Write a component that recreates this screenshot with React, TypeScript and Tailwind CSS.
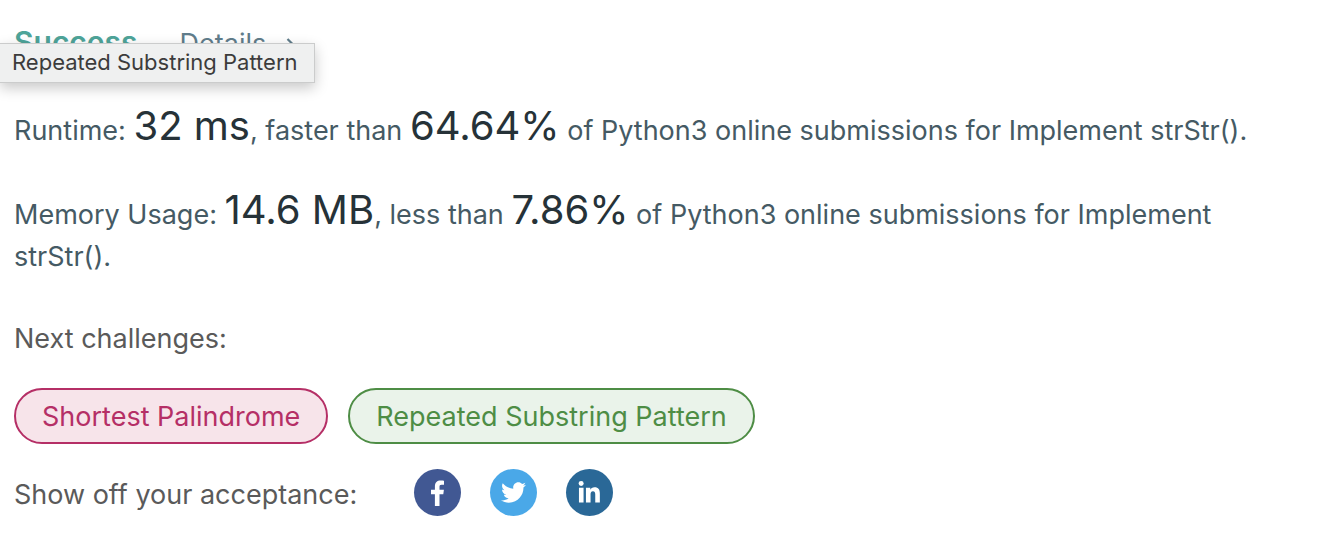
import React from "react";
import { FaTwitter } from "react-icons/fa";

function Figure({ children }: { children: React.ReactNode }) {
  return <strong className="text-[40px] font-normal leading-8 text-[#263238]">{children}</strong>;
}

export default function App() {
  return (
    <main className="relative min-h-screen bg-white pb-8 pl-3.5 pr-10 pt-[21px] font-['Inter',sans-serif] text-[27px] leading-[42px] text-[#455a64]">
      <header className="flex items-baseline gap-[42px]">
        <h1 className="text-[30px] font-semibold text-[#4ea499]">Success</h1>
        <a href="#details" className="flex items-center gap-5 text-[#607d8b]">
          Details
          <svg viewBox="0 0 8 12" className="h-3 w-2" fill="none" stroke="currentColor" strokeWidth="2.2" aria-hidden="true">
            <path d="M1.5 1 6.5 6 1.5 11" />
          </svg>
        </a>
      </header>
      <div role="tooltip" className="absolute left-0 top-[43px] border-y border-r border-[#cbcccc] bg-[#eff0f0] pb-0.5 pl-3 pr-4 text-[22px] leading-9 text-[#3c3c3c] shadow-[0_5px_14px_rgba(0,0,0,0.22)]">
        Repeated Substring Pattern
      </div>
      <p className="mt-[45px]">
        Runtime: <Figure>32 ms</Figure>, faster than <Figure>64.64%</Figure> of Python3 online submissions for Implement strStr().
      </p>
      <p className="mt-[42px]">
        Memory Usage: <Figure>14.6 MB</Figure>, less than <Figure>7.86%</Figure> of Python3 online submissions for Implement strStr().
      </p>
      <p className="mt-10 text-[#5a5a5a]">Next challenges:</p>
      <nav className="mt-7 flex gap-5">
        <a href="#shortest-palindrome" className="rounded-full border-2 border-[#b52f66] bg-[#f7e4ea] px-[26px] pb-1 pt-1.5 text-[#b52f66]">Shortest Palindrome</a>
        <a href="#repeated-substring-pattern" className="rounded-full border-2 border-[#4e8d45] bg-[#eaf3ea] px-[26px] pb-1 pt-1.5 text-[#4e8d45]">Repeated Substring Pattern</a>
      </nav>
      <div className="mt-[25px] flex items-end text-[#5a5a5a]">
        <span>Show off your acceptance:</span>
        <div className="ml-[57px] flex gap-[29px]">
          <button aria-label="Share on Facebook" className="flex size-[47px] items-center justify-center rounded-full bg-[#415893] text-white">
            <svg viewBox="0 0 14 26" className="h-[26px] w-3.5" fill="currentColor" aria-hidden="true">
              <path d="M3.9 26V14.2H0V9.8h3.9V6.3C3.9 2.5 6.2.5 9.6.5c1.6 0 3 .1 3.4.2v4h-2.3c-1.9 0-2.2.9-2.2 2.2v2.9h4.4l-.6 4.4H8.5V26z" />
            </svg>
          </button>
          <button aria-label="Share on Twitter" className="flex size-[47px] items-center justify-center rounded-full bg-[#4aa8e8] text-white">
            <FaTwitter className="size-[25px]" />
          </button>
          <button aria-label="Share on LinkedIn" className="flex size-[47px] items-center justify-center rounded-full bg-[#2a6897] text-white">
            <svg viewBox="0 0 24 24" className="size-[23px]" fill="currentColor" aria-hidden="true">
              <circle cx="3.3" cy="2.6" r="2.6" />
              <path d="M1 7h4.8v15.5H1zM8.3 7h4.5v2.1C13.6 7.6 15 6.6 17.2 6.6c4.2 0 5.6 2.6 5.6 6.5v9.4H18v-8.3c0-2.2-.4-3.5-2.4-3.5s-2.5 1.5-2.5 3.5v8.3H8.3z" />
            </svg>
          </button>
        </div>
      </div>
    </main>
  );
}
